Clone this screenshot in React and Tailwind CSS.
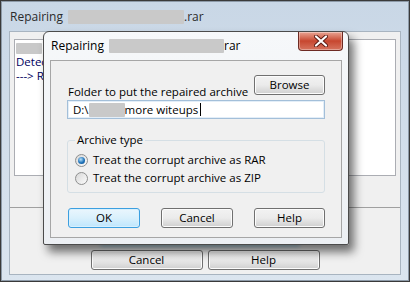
import React from 'react';

const font = { fontFamily: '"Open Sans", "Noto Sans", sans-serif' };

// blurred-out piece of a file name
const Blur = ({ className }) => (
  <span className={`inline-block rounded-[1px] bg-[#c9c9c9] blur-[0.6px] ${className}`} />
);

const WinButton = ({ children, className = '', focused = false }) => (
  <button
    className={`flex h-[20px] items-center justify-center rounded-[3px] border text-[11.5px] text-black ${
      focused
        ? 'border-[#3c9fe0] bg-gradient-to-b from-[#eaf6fd] via-[#d9f0fc] to-[#bee6fd] shadow-[inset_0_0_0_1px_#d8f0fd]'
        : 'border-[#707070] bg-gradient-to-b from-[#f2f2f2] via-[#ebebeb] to-[#cfcfcf] shadow-[inset_0_0_0_1px_#fcfcfc]'
    } ${className}`}
  >
    {children}
  </button>
);

const Radio = ({ checked, label }) => (
  <label className="flex h-[18px] items-center gap-[5px]">
    <span className="flex h-[13px] w-[13px] items-center justify-center rounded-full border border-[#8e8f8f] bg-gradient-to-br from-[#d8d8d8] to-[#fbfbfb]">
      {checked && (
        <span className="h-[7px] w-[7px] rounded-full bg-[radial-gradient(circle_at_40%_35%,#b9e2fb,#1f72b8_55%,#0c4a8a)]" />
      )}
    </span>
    <span className="whitespace-nowrap text-[11.5px] leading-none">{label}</span>
  </label>
);

const CloseButton = () => (
  <div className="absolute right-[5px] top-0 flex h-[19px] w-[45px] items-center justify-center rounded-b-[4px] border border-t-0 border-[#6d2a23] bg-gradient-to-b from-[#e8a493] via-[#c7462f] to-[#d6735e] shadow-[inset_0_0_0_1px_rgba(255,255,255,0.35)]">
    <svg width="14" height="12" viewBox="0 0 14 12">
      <path d="M2 1.5 L12 10.5 M12 1.5 L2 10.5" stroke="#5a1a12" strokeWidth="4" strokeLinecap="round" />
      <path d="M2 1.5 L12 10.5 M12 1.5 L2 10.5" stroke="#ffffff" strokeWidth="2.2" strokeLinecap="round" />
    </svg>
  </div>
);

const RepairDialog = () => (
  <div className="absolute left-[43px] top-[31px] flex h-[214px] w-[306px] flex-col rounded-t-[6px] rounded-b-[2px] border border-[#4b4b4b] bg-gradient-to-b from-[#f6f8fa] to-[#eceff3] px-[6px] pb-[6px] shadow-[5px_7px_10px_rgba(0,0,0,0.55)]">
    <CloseButton />
    {/* title */}
    <div className="flex h-[28px] items-center pl-[1px] text-[12px]">
      <span>Repairing</span>
      <Blur className="ml-[5px] h-[14px] w-[115px]" />
      <span>rar</span>
    </div>

    {/* client area */}
    <div className="flex flex-1 flex-col border border-[#a6a6a6] bg-[#f0f0f0] px-[16px] pb-[9px] pt-[14px] text-[11.5px]">
      <div className="flex items-end justify-between">
        <span className="mb-[-5px] whitespace-nowrap pl-[1px]">Folder to put the repaired archive</span>
        <WinButton className="w-[71px]">Browse</WinButton>
      </div>

      <div className="mt-[5px] flex h-[19px] items-center border border-[#a3bfd9] bg-white pl-[5px] shadow-[inset_0_0_0_1px_#e3eef8]">
        <span>D:\</span>
        <Blur className="h-[14px] w-[36px]" />
        <span>more witeups</span>
        <span className="ml-[2px] h-[13px] w-[1px] bg-black" />
      </div>

      <fieldset className="mt-[14px] h-[60px] rounded-[3px] border border-[#d5dfe5] pl-[7px] pr-2">
        <legend className="px-[2px] text-[11.5px] leading-[14px]">Archive type</legend>
        <div className="mt-[4px] flex flex-col">
          <Radio checked label="Treat the corrupt archive as RAR" />
          <Radio label="Treat the corrupt archive as ZIP" />
        </div>
      </fieldset>

      <div className="mt-auto flex justify-between">
        <WinButton focused className="ml-[1px] w-[72px]">OK</WinButton>
        <WinButton className="w-[72px]">Cancel</WinButton>
        <WinButton className="w-[71px]">Help</WinButton>
      </div>
    </div>
  </div>
);

export default function App() {
  return (
    <div style={font} className="relative h-[282px] w-[410px] overflow-hidden bg-[#3a3a3a] p-[1px] text-black">
      <div className="flex h-full flex-col border border-[#8d9aa8] bg-gradient-to-b from-[#c9d7e6] to-[#dbe5ef] px-[7px] pb-[5px]">
        {/* outer title bar */}
        <div className="flex h-[29px] items-center pl-[1px] text-[12px] text-[#2b2b2b]">
          <span>Repairing</span>
          <Blur className="ml-[5px] h-[14px] w-[116px] bg-[#b9c4cf]" />
          <span>.rar</span>
        </div>

        {/* outer client area */}
        <div className="flex flex-1 flex-col border border-[#a8b4c0] bg-[#f0f0f0]">
          <div className="mx-[4px] mt-[7px] h-[137px] overflow-hidden border border-[#abadb3] bg-white px-[1px] pt-[1px] text-[11.5px] leading-[14px] text-[#000060]">
            <div className="flex items-center">
              <Blur className="h-[11px] w-[26px]" />
              <span className="ml-[1px]">a</span>
            </div>
            <div>Detected</div>
            <div>---&gt; Repairing</div>
          </div>

          <div className="mt-[31px] border-t border-[#a0a0a0]" />

          <div className="relative flex flex-1 items-end justify-center gap-[5px] pb-[4px]">
            <div className="absolute left-[90px] top-[34px] h-[4px] w-[200px] rounded-full bg-[#9fd2ea] blur-[2px]" />
            <WinButton className="w-[112px]">Cancel</WinButton>
            <WinButton className="w-[112px]">Help</WinButton>
          </div>
        </div>
      </div>

      <RepairDialog />
    </div>
  );
}
